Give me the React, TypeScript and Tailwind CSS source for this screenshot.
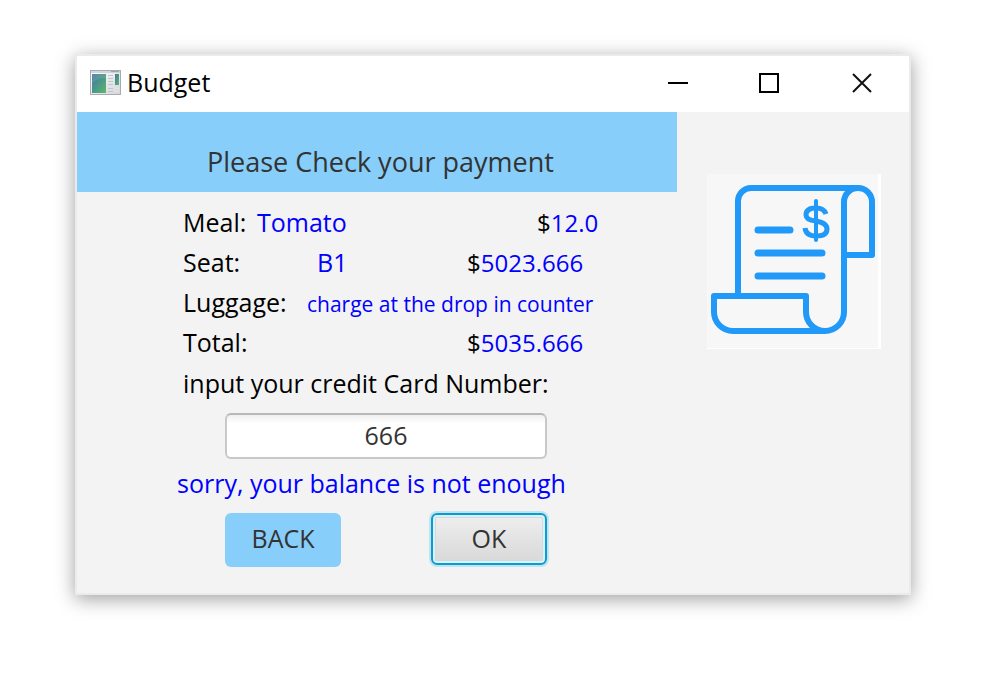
import React from "react";

function AppIcon() {
  return (
    <svg width="32" height="26" viewBox="0 0 32 26" aria-hidden="true">
      <defs>
        <linearGradient id="pane" x1="0" y1="0" x2="1" y2="1">
          <stop offset="0" stopColor="#4778a4" />
          <stop offset="0.5" stopColor="#4a9788" />
          <stop offset="1" stopColor="#5fb86c" />
        </linearGradient>
        <linearGradient id="frame" x1="0" y1="0" x2="1" y2="1">
          <stop offset="0" stopColor="#ffffff" />
          <stop offset="1" stopColor="#d3d5d9" />
        </linearGradient>
      </defs>
      <rect x="0.5" y="0.5" width="30" height="24" fill="url(#frame)" stroke="#a9abb0" />
      <path d="M1 2H30" stroke="#c5cad2" strokeWidth="1.5" />
      <path d="M21 1.5H29" stroke="#9ba6b5" />
      <rect x="2" y="4" width="14" height="19" fill="url(#pane)" />
      <path d="M2 13Q7 8 16 8V4H2Z" fill="#ffffff" opacity="0.1" />
      <path
        d="M18 5.5H23M18 8.5H23M18 11.5H23M18 14.5H23M18 18.5H23M18 21.5H23"
        stroke="#c3c5c8"
      />
      <rect x="25" y="4" width="4" height="11" fill="url(#pane)" />
      <path d="M25 18.5H29M25 21.5H29" stroke="#e2e4e6" />
    </svg>
  );
}

function ReceiptIcon() {
  return (
    <svg
      viewBox="0 0 171 174"
      className="block w-full"
      fill="none"
      stroke="#2199f8"
      strokeWidth="6"
      strokeLinecap="round"
      strokeLinejoin="round"
      role="img"
      aria-label="Receipt"
    >
      <path d="M31 119V27A13 13 0 0 1 44 14H151A14 14 0 0 1 165 28V81H137" />
      <path d="M151 14A14 14 0 0 0 137 28V138A19 19 0 0 1 99 138V122H7V138A19 19 0 0 0 26 157H118" />
      <path d="M51 56H83M51 79H115M51 102H115" strokeWidth="7" />
      <path d="M109 27V66" strokeWidth="4" />
      <path
        d="M119 40Q117 34 109 34Q99 34 99 41Q99 46 109 47Q120 49 120 55Q120 62 109 62Q99 62 98 54"
        strokeWidth="5"
        strokeLinecap="butt"
      />
    </svg>
  );
}

type RowProps = {
  label: string;
  labelWidth: string;
  value?: string;
  valueSize?: string;
  price?: string;
  priceIndent?: string;
};

function Row({ label, labelWidth, value, valueSize = "", price, priceIndent = "" }: RowProps) {
  return (
    <div className="flex h-10 items-baseline leading-10 whitespace-nowrap">
      <dt className={`shrink-0 ${labelWidth}`}>{label}</dt>
      {value && <dd className={`text-[#0000ff] ${valueSize}`}>{value}</dd>}
      {price && (
        <dd className={`ml-auto flex w-[171px] text-[24px] ${priceIndent}`}>
          <span>$</span>
          <span className="text-[#0000ff]">{price}</span>
        </dd>
      )}
    </div>
  );
}

export default function App() {
  return (
    <main className="min-h-screen bg-white px-[75px] pt-[54px] pb-20 font-['Open_Sans',sans-serif] text-[25px] text-black">
      <section className="mr-[2px] border-2 border-[#ebebeb] bg-[#f3f3f3] shadow-[0_4px_18px_rgba(0,0,0,0.38)]">
        <header className="flex h-14 items-center bg-white pr-9 pb-[2px] pl-[13px]">
          <AppIcon />
          <h1 className="ml-[5px] flex-1">Budget</h1>
          <div className="flex items-center gap-[71px]">
            <button type="button" aria-label="Minimize">
              <svg width="20" height="20" className="block" stroke="#000" strokeWidth="2">
                <path d="M0 10H20" />
              </svg>
            </button>
            <button type="button" aria-label="Maximize">
              <svg width="20" height="20" className="block" fill="none" stroke="#000" strokeWidth="2">
                <rect x="1" y="1" width="18" height="18" />
              </svg>
            </button>
            <button type="button" aria-label="Close">
              <svg width="23" height="20" className="block" stroke="#111" strokeWidth="2">
                <path d="M3 1L21 19M21 1L3 19" />
              </svg>
            </button>
          </div>
        </header>

        <div className="flex items-start">
          <div className="w-[600px] pb-[26px]">
            <h2 className="h-20 bg-[#87cefa] pt-8 pl-[130px] text-[27px] leading-9 text-[#333]">
              Please Check your payment
            </h2>
            <form className="mt-[10px] pr-[39px] pl-[57px]" onSubmit={(e) => e.preventDefault()}>
              <dl className="pb-[2px] pl-[49px]">
                <Row label="Meal:" labelWidth="w-[74px]" value="Tomato" price="12.0" priceIndent="pl-[70px]" />
                <Row label="Seat:" labelWidth="w-[134px]" value="B1" price="5023.666" />
                <Row
                  label="Luggage:"
                  labelWidth="w-[124px]"
                  value="charge at the drop in counter"
                  valueSize="text-[21px]"
                />
                <Row label="Total:" labelWidth="w-[134px]" price="5035.666" />
              </dl>
              <label htmlFor="card" className="flex h-10 items-center pl-[49px] whitespace-nowrap">
                input your credit Card Number:
              </label>
              <div className="mt-[9px] px-[91px]">
                <input
                  id="card"
                  type="text"
                  defaultValue="666"
                  className="block h-[46px] w-full rounded-md border-2 border-[#c8c8c8] border-t-[#b8b8b8] bg-linear-to-b from-[#f0f0f0] to-white to-20% pb-[2px] text-center text-[25px] text-[#333] outline-none"
                />
              </div>
              <p className="mt-[5px] flex h-10 items-center pl-[43px] whitespace-nowrap text-[#0000ff]">
                sorry, your balance is not enough
              </p>
              <div className="mt-[9px] flex items-start justify-between px-[91px]">
                <button type="button" className="h-[54px] w-[116px] rounded-md bg-[#87cefa] pb-[2px] text-[#333]">
                  BACK
                </button>
                <button
                  type="submit"
                  className="h-[52px] w-[116px] rounded-md border-2 border-[#039ed3] bg-linear-to-b from-[#efefef] to-[#d8d8d8] text-[#333] shadow-[0_0_0_2px_#c5e3ed,inset_0_0_0_2px_#e0eff3,inset_0_0_0_3px_#c9dde2]"
                >
                  OK
                </button>
              </div>
            </form>
          </div>
          <div className="flex-1 pt-[62px] pr-7 pl-[30px]">
            <div className="border-r-[3px] border-b border-white bg-[#f7f7f7]">
              <ReceiptIcon />
            </div>
          </div>
        </div>
      </section>
    </main>
  );
}
